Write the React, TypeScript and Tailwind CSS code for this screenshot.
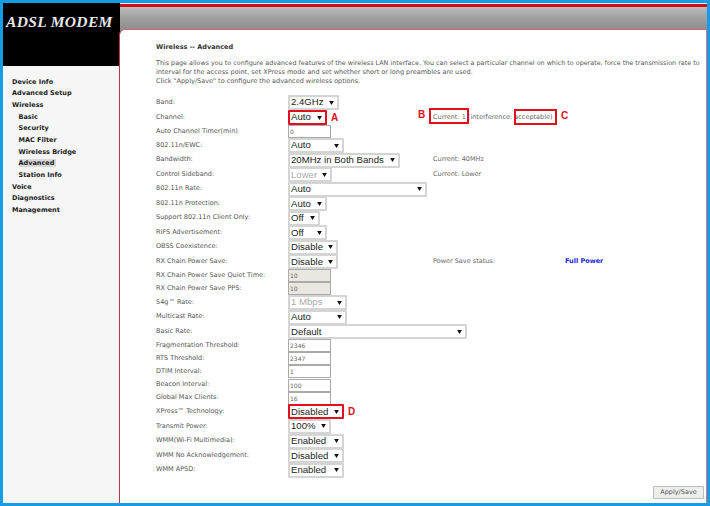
import React from "react";

type Row = {
  label: string;
  h: string;
  kind: "select" | "input";
  value: string;
  width: string;
  disabled?: boolean;
  marked?: boolean;
  mark?: string;
};

const rows: Row[] = [
  { label: "Band:", h: "h-[15px]", kind: "select", value: "2.4GHz", width: "w-[51px]" },
  { label: "Channel:", h: "h-[15px]", kind: "select", value: "Auto", width: "w-[39px]", marked: true, mark: "A" },
  { label: "Auto Channel Timer(min)", h: "h-[13px]", kind: "input", value: "0", width: "w-[43px]" },
  { label: "802.11n/EWC:", h: "h-[15px]", kind: "select", value: "Auto", width: "w-[56px]" },
  { label: "Bandwidth:", h: "h-[14.5px]", kind: "select", value: "20MHz in Both Bands", width: "w-[112px]" },
  { label: "Control Sideband:", h: "h-[14.5px]", kind: "select", value: "Lower", width: "w-[44px]", disabled: true },
  { label: "802.11n Rate:", h: "h-[14.5px]", kind: "select", value: "Auto", width: "w-[139px]" },
  { label: "802.11n Protection:", h: "h-[14.5px]", kind: "select", value: "Auto", width: "w-[39px]" },
  { label: "Support 802.11n Client Only:", h: "h-[14.5px]", kind: "select", value: "Off", width: "w-[32px]" },
  { label: "RIFS Advertisement:", h: "h-[14.5px]", kind: "select", value: "Off", width: "w-[39px]" },
  { label: "OBSS Coexistence:", h: "h-[14.5px]", kind: "select", value: "Disable", width: "w-[50px]" },
  { label: "RX Chain Power Save:", h: "h-[14.5px]", kind: "select", value: "Disable", width: "w-[50px]" },
  { label: "RX Chain Power Save Quiet Time:", h: "h-[13px]", kind: "input", value: "10", width: "w-[43px]", disabled: true },
  { label: "RX Chain Power Save PPS:", h: "h-[13px]", kind: "input", value: "10", width: "w-[43px]", disabled: true },
  { label: "54g™ Rate:", h: "h-[15px]", kind: "select", value: "1 Mbps", width: "w-[59px]", disabled: true },
  { label: "Multicast Rate:", h: "h-[14.5px]", kind: "select", value: "Auto", width: "w-[59px]" },
  { label: "Basic Rate:", h: "h-[14.5px]", kind: "select", value: "Default", width: "w-[179px]" },
  { label: "Fragmentation Threshold:", h: "h-[13.2px]", kind: "input", value: "2346", width: "w-[43px]" },
  { label: "RTS Threshold:", h: "h-[13.2px]", kind: "input", value: "2347", width: "w-[43px]" },
  { label: "DTIM Interval:", h: "h-[13.2px]", kind: "input", value: "1", width: "w-[43px]" },
  { label: "Beacon Interval:", h: "h-[13.2px]", kind: "input", value: "100", width: "w-[43px]" },
  { label: "Global Max Clients:", h: "h-[13.2px]", kind: "input", value: "16", width: "w-[43px]" },
  { label: "XPress™ Technology:", h: "h-[14px]", kind: "select", value: "Disabled", width: "w-[56px]", marked: true, mark: "D" },
  { label: "Transmit Power:", h: "h-[15px]", kind: "select", value: "100%", width: "w-[43px]" },
  { label: "WMM(Wi-Fi Multimedia):", h: "h-[14.5px]", kind: "select", value: "Enabled", width: "w-[56px]" },
  { label: "WMM No Acknowledgement:", h: "h-[14.5px]", kind: "select", value: "Disabled", width: "w-[56px]" },
  { label: "WMM APSD:", h: "h-[14.5px]", kind: "select", value: "Enabled", width: "w-[56px]" },
];

const nav = [
  { name: "Device Info" },
  { name: "Advanced Setup" },
  { name: "Wireless" },
  { name: "Basic", sub: true },
  { name: "Security", sub: true },
  { name: "MAC Filter", sub: true },
  { name: "Wireless Bridge", sub: true },
  { name: "Advanced", sub: true, active: true },
  { name: "Station Info", sub: true },
  { name: "Voice" },
  { name: "Diagnostics" },
  { name: "Management" },
];

function Field({ row }: { row: Row }) {
  if (row.kind === "input") {
    return (
      <div
        className={`${row.width} h-[13px] shrink-0 border border-[#aaa] pl-[1px] text-[6px] leading-[11px] text-[#666] ${
          row.disabled ? "bg-[#e8e8e0]" : "bg-white"
        }`}
      >
        {row.value}
      </div>
    );
  }
  return (
    <div className="flex items-center">
      <div
        className={`${row.width} flex h-[15px] shrink-0 items-center justify-between rounded-[1px] border-2 pl-[1px] pr-[3px] font-['Liberation_Sans',sans-serif] text-[9.6px] ${
          row.marked ? "border-[#e01020]" : "border-[#d4d4d4]"
        } ${row.disabled ? "bg-white text-[#aaa]" : "bg-white text-[#222]"}`}
      >
        <span className="whitespace-nowrap">{row.value}</span>
        <svg width="5" height="4" viewBox="0 0 6 5" className="shrink-0">
          <path d="M0 0h6L3 5z" fill="#111" />
        </svg>
      </div>
      {row.mark && (
        <span className="ml-[4px] font-['Liberation_Sans',sans-serif] text-[10px] font-bold text-[#e01020]">
          {row.mark}
        </span>
      )}
    </div>
  );
}

function Side({ label }: { label: string }) {
  if (label === "Channel:") {
    return (
      <div className="relative flex items-center text-[#666]">
        <span className="absolute left-[-15px] top-[-6px] font-['Liberation_Sans',sans-serif] text-[10px] font-bold text-[#e01020]">
          B
        </span>
        <span className="whitespace-nowrap">Current: 1 (interference: acceptable)</span>
        <div className="absolute left-[-4px] top-[-5px] h-[16px] w-[40px] border-2 border-[#e01020]" />
        <div className="absolute left-[81px] top-[-4px] h-[16px] w-[43px] border-2 border-[#e01020]" />
        <span className="absolute left-[128px] top-[-5px] font-['Liberation_Sans',sans-serif] text-[10px] font-bold text-[#e01020]">
          C
        </span>
      </div>
    );
  }
  if (label === "Bandwidth:") return <span className="text-[#666]">Current: 40MHz</span>;
  if (label === "Control Sideband:") return <span className="text-[#666]">Current: Lower</span>;
  if (label === "RX Chain Power Save:") {
    return (
      <div className="flex text-[#666]">
        <span className="w-[132px]">Power Save status:</span>
        <span className="font-semibold text-[#1a1ae0]">Full Power</span>
      </div>
    );
  }
  return null;
}

export default function App() {
  return (
    <div className="h-[506px] w-[710px] overflow-hidden bg-[#159ce4] p-[3px] font-['DejaVu_Sans',sans-serif]">
      <div className="flex h-[500px] w-[704px]">
        {/* Left column */}
        <div className="flex w-[117px] shrink-0 flex-col">
          <div className="h-[63px] bg-black pl-[3px] pt-[7px]">
            <span className="whitespace-nowrap font-['Liberation_Serif',serif] text-[15.5px] font-bold italic tracking-[0.35px] text-[#e8e8e8]">
              ADSL MODEM
            </span>
          </div>
          <div className="flex flex-1 flex-col border-r border-[#c03050] bg-[#f6f6f6] pl-[9px] pt-[10.5px]">
            {nav.map((item) => (
              <div
                key={item.name}
                className={`h-[11.7px] text-[6.5px] font-bold leading-[11.7px] text-[#1c1c1c] ${item.sub ? "pl-[6.5px]" : ""}`}
              >
                <span className={item.active ? "bg-[#d8d8d8] pr-[2px]" : ""}>{item.name}</span>
              </div>
            ))}
          </div>
        </div>

        {/* Main column */}
        <div className="flex min-w-0 flex-1 flex-col bg-[#8e8e8e]">
          <div className="h-[1px] bg-[#e8e8e8]" />
          <div className="h-[3px] bg-[#cc1018]" />
          <div className="h-[22px] bg-gradient-to-b from-[#bcbcbc] via-[#a0a0a0] to-[#8e8e8e]" />
          <div className="-ml-[1px] flex min-h-0 flex-1 flex-col overflow-hidden rounded-tl-[6px] border-t border-r border-l border-t-[#e06078] border-r-[#e87088] border-l-[#c03050] bg-white pl-[36px] pt-[12px] text-[6.5px] text-[#555]">
            <div className="h-[10px] font-bold leading-[10px] text-[#333]">Wireless -- Advanced</div>
            <div className="mt-[7px] h-[9px] whitespace-nowrap text-[6.4px] leading-[9px]">
              This page allows you to configure advanced features of the wireless LAN interface. You can select a particular channel on which to operate, force the transmission rate to
            </div>
            <div className="h-[9px] whitespace-nowrap leading-[9px]">
              interval for the access point, set XPress mode and set whether short or long preambles are used.
            </div>
            <div className="h-[9px] whitespace-nowrap leading-[9px]">
              Click "Apply/Save" to configure the advanced wireless options.
            </div>
            <div className="mt-[9px] flex flex-col">
              {rows.map((row) => (
                <div key={row.label} className={`${row.h} flex items-center`}>
                  <div className="w-[132px] shrink-0 whitespace-nowrap">{row.label}</div>
                  <div className="w-[145px] shrink-0">
                    <Field row={row} />
                  </div>
                  <Side label={row.label} />
                </div>
              ))}
            </div>
            <div className="mt-auto mb-[4px] mr-[2px] self-end">
              <button className="h-[13px] w-[51px] rounded-[1px] border border-[#bbb] bg-[#eeeeee] text-[6.5px] leading-[11px] text-[#555]">
                Apply/Save
              </button>
            </div>
          </div>
        </div>
      </div>
    </div>
  );
}
